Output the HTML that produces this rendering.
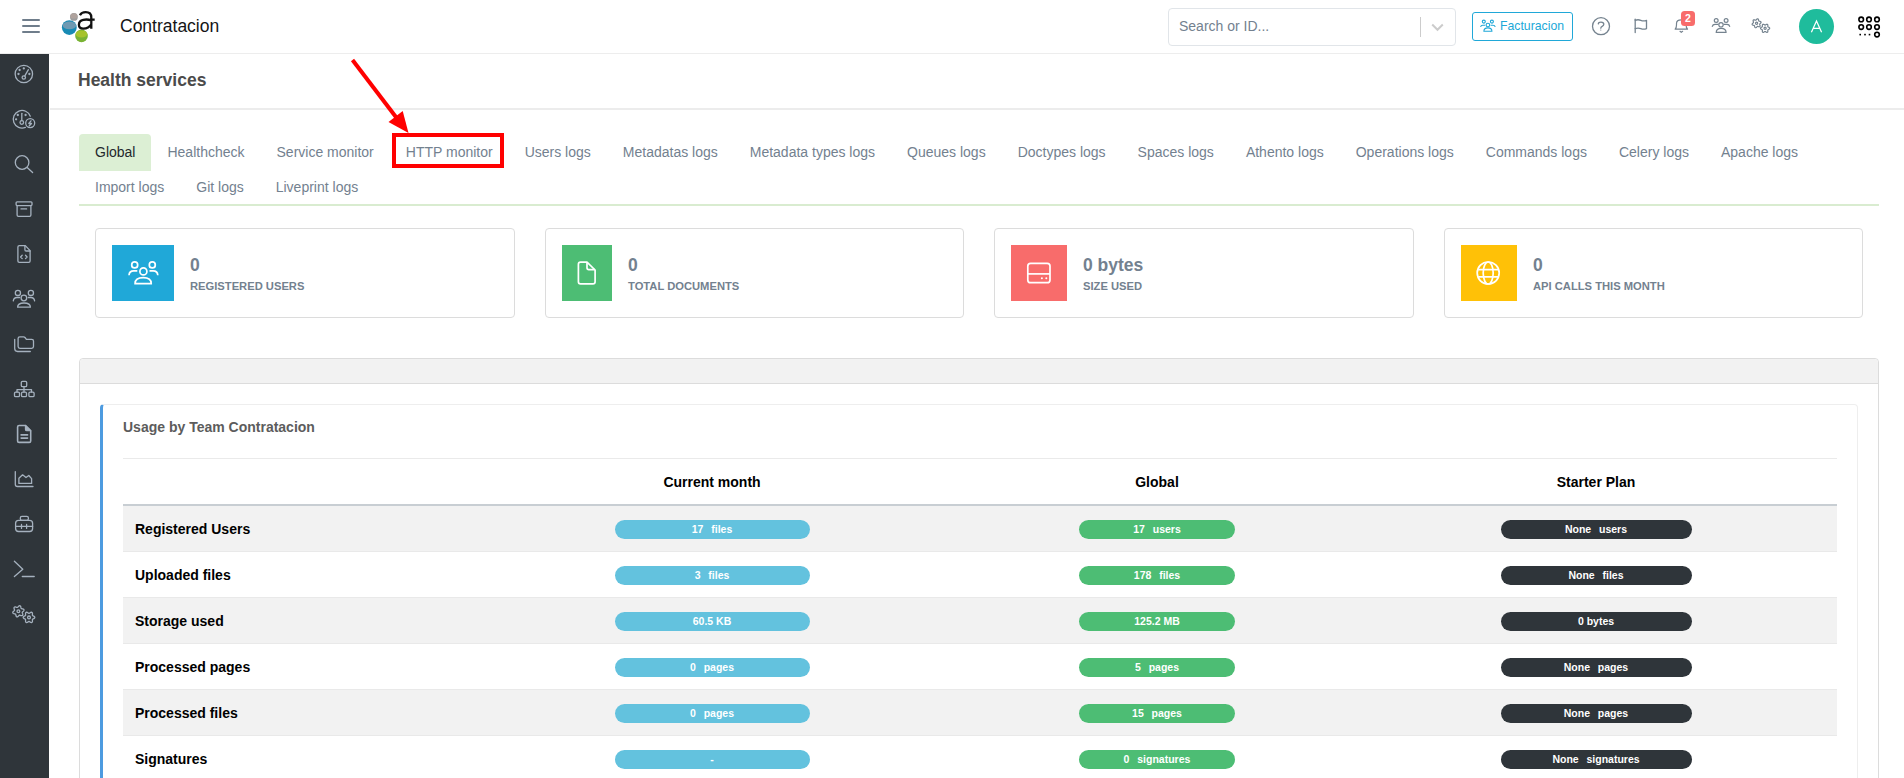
<!DOCTYPE html>
<html><head><meta charset="utf-8">
<style>
*{box-sizing:border-box;margin:0;padding:0}
html,body{width:1904px;height:778px;overflow:hidden;background:#fff;font-family:"Liberation Sans",sans-serif;}
.abs{position:absolute}
#hdr{position:absolute;left:0;top:0;width:1904px;height:54px;background:#fff;border-bottom:1px solid #ededed}
#side{position:absolute;left:0;top:54px;width:49px;height:724px;background:#2f353a}
.sico{position:absolute;left:9px;width:30px;height:30px}
.sico svg,.hico svg{display:block}
.hico{position:absolute;width:30px;height:30px}
#burger{position:absolute;left:22px;top:19px;width:18px;height:14px}
#burger i{position:absolute;left:0;width:18px;height:2px;background:#6f7d8b;border-radius:1px}
#brand{position:absolute;left:120px;top:16px;font-size:17.5px;line-height:20px;color:#151515}
#search{position:absolute;left:1168px;top:8px;width:288px;height:38px;border:1px solid #e1e5e9;border-radius:4px}
#search .ph{position:absolute;left:10px;top:8px;font-size:14px;line-height:18px;color:#73818f}
#search .sep{position:absolute;left:251px;top:8px;width:1px;height:20px;background:#cccccc}
#search svg{position:absolute;left:262px;top:14px}
#fact{position:absolute;left:1472px;top:12px;width:101px;height:29px;border:1px solid #20a8d8;border-radius:3px;color:#20a8d8;font-size:12.25px;line-height:18px}
#fact span{position:absolute;left:27px;top:3.5px}
#fact svg{position:absolute;left:7px;top:6px}
#nbadge{position:absolute;left:1681px;top:11px;width:14px;height:15px;background:#f86c6b;border-radius:3.5px;color:#fff;font-size:10.5px;font-weight:bold;line-height:15px;text-align:center}
#avatar{position:absolute;left:1799px;top:9px;width:35px;height:35px;border-radius:50%;background:#1fbc9c}
#avatar svg{display:block}
#apps{position:absolute;left:1855px;top:14px}
#title{position:absolute;left:78px;top:70px;font-size:17.5px;font-weight:bold;color:#4b4b4b;line-height:20px}
#tline{position:absolute;left:50px;top:108px;width:1854px;height:2px;background:#ececec}
#tabs{position:absolute;left:79px;top:134px;width:1800px;height:72px;border-bottom:2px solid #d9ecd0}
.tabwrap{display:flex;flex-wrap:wrap}
.tab{margin-bottom:-2px;height:37px;padding:0 16px;font-size:14px;line-height:37px;color:#73818f;white-space:nowrap}
.tab.act{background:#dcefd4;color:#23282c;border-radius:4px 4px 0 0}
#redbox{position:absolute;left:392px;top:133px;width:112px;height:35px;border:4px solid #ff0000}
#arrow{position:absolute;left:340px;top:50px}
.stat{position:absolute;top:228px;width:420px;height:90px;border:1px solid #dcdcdc;border-radius:4px;background:#fff}
.stat .ic{position:absolute;left:16px;top:16px;width:62px;height:56px}
.stat .ic svg{position:absolute;left:0;top:0}
.stat .v{position:absolute;left:94px;top:26px;font-size:17.5px;font-weight:bold;color:#73818f;line-height:20px}
.stat .l{position:absolute;left:94px;top:50px;font-size:11.2px;font-weight:bold;color:#73818f;line-height:14px}
#panel{position:absolute;left:79px;top:358px;width:1800px;height:440px;border:1px solid #dcdcdc;border-radius:4px}
#panel .ph{position:absolute;left:0;top:0;width:1798px;height:25px;background:#f2f2f2;border-bottom:1px solid #dcdcdc;border-radius:4px 4px 0 0}
#card{position:absolute;left:100px;top:404px;width:1758px;height:400px;border:1px solid #eeeeee;border-left:3px solid #4d9be0;border-radius:4px}
#utitle{position:absolute;left:123px;top:418px;font-size:14px;font-weight:bold;color:#5c5c5c;line-height:18px}
#hr{position:absolute;left:123px;top:458px;width:1714px;height:1px;background:#eaeaea}
table{position:absolute;left:123px;top:459px;width:1714px;border-collapse:separate;border-spacing:0;font-size:14px}
th{height:47px;font-weight:bold;color:#000;text-align:center;border-bottom:2px solid #c8ced3;padding:0;vertical-align:middle}
td{height:46px;padding:0;vertical-align:middle}
tr.odd td{background:#f2f2f2}
tr+tr+tr td{border-top:1px solid #e9e9e9}
tr:nth-child(2) td{height:45px}
td.n{font-weight:bold;color:#000;padding-left:12px}
td.b{text-align:center}
.bd{display:inline-block;height:19px;border-radius:10px;color:#fff;font-size:10.5px;font-weight:bold;line-height:19px;text-align:center;white-space:pre;vertical-align:middle;position:relative;top:1px}
.ws{word-spacing:1px}
.c1{width:195px;background:#63c2de}
.c2{width:156px;background:#4dbd74}
.c3{width:191px;background:#2f353a}
</style></head><body>
<div id="hdr">
 <div id="burger"><i style="top:0"></i><i style="top:6px"></i><i style="top:12px"></i></div>
 <svg class="abs" style="left:55px;top:5px" width="45" height="40" viewBox="0 0 45 40">
  <defs>
   <clipPath id="cb"><circle cx="14.3" cy="22.6" r="7.4"/></clipPath>
   <clipPath id="cg"><circle cx="26.5" cy="30.9" r="6.3"/></clipPath>
   <clipPath id="cy"><circle cx="18.9" cy="11.9" r="3.9"/></clipPath>
  </defs>
  <circle cx="18.9" cy="11.9" r="3.9" fill="#9c9c9c"/>
  <ellipse cx="18.9" cy="10.9" rx="3.6" ry="2.6" fill="#afa29d" clip-path="url(#cy)"/>
  <circle cx="14.3" cy="22.6" r="7.4" fill="#188bb4"/>
  <ellipse cx="14.4" cy="20.4" rx="6.7" ry="3.9" fill="#6f9ab2" clip-path="url(#cb)"/>
  <circle cx="26.5" cy="30.9" r="6.3" fill="#79b333"/>
  <ellipse cx="26.5" cy="29" rx="5.9" ry="3.4" fill="#a6c32b" clip-path="url(#cg)"/>
  <path transform="translate(0.3 0.8)" d="M24.6 9.4 C25.8 7.1 27.8 6.3 30.4 6.3 C34.2 6.3 36 8.3 36 11.6 V22.9 M36 13.9 H39.4 M36 14.6 C33.5 13.7 30.5 13.5 28 14.1 C25 14.8 23.6 16.6 23.6 19 C23.6 21.5 25.4 22.8 28 22.8 C31.5 22.8 34.5 21 36 18.6" fill="none" stroke="#111" stroke-width="2.3"/>
 </svg>
 <div id="brand">Contratacion</div>
 <div id="search"><span class="ph">Search or ID...</span><i class="sep"></i>
  <svg width="13" height="9" viewBox="0 0 13 9"><path d="M1.2 1.5 L6.5 6.8 L11.8 1.5" fill="none" stroke="#cccccc" stroke-width="2"/></svg></div>
 <div id="fact"><svg width="16" height="16" viewBox="0 0 16 16" fill="none" stroke="#20a8d8" stroke-width="1.1"><circle cx="3.8" cy="2.6" r="1.5"/><circle cx="11.9" cy="2.6" r="1.5"/><circle cx="7.9" cy="6" r="1.8"/><path d="M.6 8 C.8 6.9 1.6 6.3 2.8 6.3 H5.2"/><path d="M10.6 6.3 H13 C14.2 6.3 15 6.9 15.2 8"/><path d="M3.9 12.2 C3.9 10.1 5.4 8.9 7.9 8.9 C10.4 8.9 11.9 10.1 11.9 12.2 Z"/></svg><span>Facturacion</span></div>
 <div class="hico" style="left:1586px;top:11px"><svg viewBox="0 0 30 30" width="30" height="30" fill="none" stroke="#75838f" stroke-width="1.3" stroke-linecap="round" stroke-linejoin="round"><circle cx="15" cy="15.2" r="8.5"/><path d="M12.3 12.9 Q12.5 11.1 15 11.1 Q17.8 11.1 17.8 13.3 Q17.8 14.6 16.2 15.3 Q14.8 15.9 14.8 17.2"/><circle cx="14.8" cy="19" r=".6" fill="#75838f" stroke="none"/></svg></div>
 <div class="hico" style="left:1626px;top:11px"><svg viewBox="0 0 30 30" width="30" height="30" fill="none" stroke="#75838f" stroke-width="1.3" stroke-linecap="round" stroke-linejoin="round"><path d="M9.2 8.2 V21.5"/><path d="M9.2 9.3 Q12 8.2 14.8 9.3 Q17.6 10.4 20.5 9.3 V17.6 Q17.6 18.7 14.8 17.6 Q12 16.5 9.2 17.6"/></svg></div>
 <div class="hico" style="left:1666px;top:6px"><svg viewBox="0 0 30 30" width="30" height="30" fill="none" stroke="#75838f" stroke-width="1.2" stroke-linecap="round" stroke-linejoin="round"><path d="M9.2 23.2 Q10.5 21.6 10.5 19 V17.5 Q10.5 13.9 15.3 13.9 Q20.1 13.9 20.1 17.5 V19 Q20.1 21.6 21.5 23.2 Z"/><path d="M14 25.3 L15.3 26.3 L16.6 25.3"/></svg></div>
 <div id="nbadge">2</div>
 <div class="hico" style="left:1706px;top:11px"><svg viewBox="0 0 30 30" width="30" height="30" fill="none" stroke="#75838f" stroke-width="1.2" stroke-linecap="round" stroke-linejoin="round"><circle cx="10.2" cy="9.5" r="1.9"/><circle cx="20.1" cy="9.5" r="1.9"/><circle cx="15" cy="13.8" r="2.2"/><path d="M6.3 15.4 C6.6 14.1 7.6 13.4 9 13.4 H11.8"/><path d="M18.2 13.4 H21 C22.4 13.4 23.4 14.1 23.7 15.4"/><path d="M10.2 21.4 C10.2 18.9 12 17.3 15.1 17.3 C18.2 17.3 20.1 18.9 20.1 21.4 Z"/></svg></div>
 <div class="hico" style="left:1746px;top:11px"><svg viewBox="0 0 30 30" width="30" height="30" fill="none" stroke="#75838f" stroke-width="1.2" stroke-linecap="round" stroke-linejoin="round"><path d="M14.50 12.30 L14.14 12.61 L13.84 12.87 L13.69 13.13 L13.70 13.43 L13.82 13.80 L13.98 14.25 L14.08 14.74 L14.05 15.20 L13.85 15.55 L13.50 15.75 L13.04 15.78 L12.55 15.68 L12.10 15.52 L11.73 15.40 L11.43 15.39 L11.17 15.54 L10.91 15.84 L10.60 16.20 L10.23 16.53 L9.82 16.74 L9.41 16.74 L9.06 16.53 L8.80 16.15 L8.65 15.68 L8.56 15.21 L8.48 14.82 L8.34 14.56 L8.08 14.42 L7.69 14.34 L7.22 14.25 L6.75 14.10 L6.37 13.84 L6.16 13.49 L6.16 13.08 L6.37 12.67 L6.70 12.30 L7.06 11.99 L7.36 11.73 L7.51 11.47 L7.50 11.17 L7.38 10.80 L7.22 10.35 L7.12 9.86 L7.15 9.40 L7.35 9.05 L7.70 8.85 L8.16 8.82 L8.65 8.92 L9.10 9.08 L9.47 9.20 L9.77 9.21 L10.03 9.06 L10.29 8.76 L10.60 8.40 L10.97 8.07 L11.38 7.86 L11.79 7.86 L12.14 8.07 L12.40 8.45 L12.55 8.92 L12.64 9.39 L12.72 9.78 L12.86 10.04 L13.12 10.18 L13.51 10.26 L13.98 10.35 L14.45 10.50 L14.83 10.76 L15.04 11.11 L15.04 11.52 L14.83 11.93Z"/><circle cx="10.6" cy="12.3" r="1.1"/><path d="M23.70 17.30 L23.59 17.69 L23.29 18.04 L22.87 18.31 L22.44 18.51 L22.09 18.69 L21.87 18.90 L21.80 19.19 L21.82 19.58 L21.86 20.06 L21.83 20.56 L21.68 20.99 L21.40 21.28 L21.00 21.38 L20.55 21.29 L20.11 21.07 L19.72 20.80 L19.39 20.58 L19.10 20.50 L18.81 20.58 L18.48 20.80 L18.09 21.07 L17.65 21.29 L17.20 21.38 L16.80 21.28 L16.52 20.99 L16.37 20.56 L16.34 20.06 L16.38 19.58 L16.40 19.19 L16.33 18.90 L16.11 18.69 L15.76 18.51 L15.33 18.31 L14.91 18.04 L14.61 17.69 L14.50 17.30 L14.61 16.91 L14.91 16.56 L15.33 16.29 L15.76 16.09 L16.11 15.91 L16.33 15.70 L16.40 15.41 L16.38 15.02 L16.34 14.54 L16.37 14.04 L16.52 13.61 L16.80 13.32 L17.20 13.22 L17.65 13.31 L18.09 13.53 L18.48 13.80 L18.81 14.02 L19.10 14.10 L19.39 14.02 L19.72 13.80 L20.11 13.53 L20.55 13.31 L21.00 13.22 L21.40 13.32 L21.68 13.61 L21.83 14.04 L21.86 14.54 L21.82 15.02 L21.80 15.41 L21.87 15.70 L22.09 15.91 L22.44 16.09 L22.87 16.29 L23.29 16.56 L23.59 16.91Z"/><circle cx="19.1" cy="17.3" r="1.1"/></svg></div>
 <div id="avatar"><svg width="35" height="35" viewBox="0 0 35 35" fill="none" stroke="#fff" stroke-width="1.25"><path d="M12.4 23.2 L17.5 12.1 L22.6 23.2 M14.2 19.4 H20.8"/></svg></div>
 <svg id="apps" width="30" height="28" viewBox="0 0 30 28" fill="none" stroke="#000" stroke-width="1.6">
  <circle cx="6.2" cy="5.4" r="2.3"/><circle cx="14" cy="5.4" r="2.3"/><circle cx="22" cy="5.4" r="2.3"/>
  <circle cx="6.2" cy="13.1" r="2.3"/><circle cx="14" cy="13.1" r="2.3"/><circle cx="22" cy="13.1" r="2.3"/>
  <circle cx="22" cy="20.6" r="2.3"/>
  <rect x="4.4" y="19.8" width="1.6" height="1.6" fill="#000" stroke="none"/><rect x="9.2" y="19.8" width="1.6" height="1.6" fill="#000" stroke="none"/><rect x="13.7" y="19.8" width="1.6" height="1.6" fill="#000" stroke="none"/>
 </svg>
</div>
<div id="side"><div class="sico" style="top:5px"><svg viewBox="0 0 30 30" width="30" height="30" fill="none" stroke="#a5b1be" stroke-width="1.3" stroke-linecap="round" stroke-linejoin="round"><circle cx="14.85" cy="15" r="8.7"/><circle cx="14.8" cy="18.5" r="1.7"/><path d="M15.8 16.9 L19.4 10.7"/><circle cx="10.6" cy="11" r=".5" fill="#a5b1be"/><circle cx="14.8" cy="9.4" r=".5" fill="#a5b1be"/><circle cx="9.5" cy="15" r=".5" fill="#a5b1be"/><circle cx="20.4" cy="15" r=".5" fill="#a5b1be"/></svg></div><div class="sico" style="top:50px"><svg viewBox="0 0 30 30" width="30" height="30" fill="none" stroke="#a5b1be" stroke-width="1.3" stroke-linecap="round" stroke-linejoin="round"><path d="M16.4 23.4 A8.8 8.8 0 1 1 21.3 12.2"/><circle cx="12.8" cy="18.5" r="1.8"/><path d="M12.8 9.3 V16.6"/><circle cx="8.8" cy="11" r=".5" fill="#a5b1be"/><circle cx="16.6" cy="11" r=".5" fill="#a5b1be"/><circle cx="7.1" cy="15.3" r=".5" fill="#a5b1be"/><circle cx="21.2" cy="19.1" r="4.5"/><path d="M22 16.8 L19.8 19.5 H22.5 L20.3 21.8"/></svg></div><div class="sico" style="top:95px"><svg viewBox="0 0 30 30" width="30" height="30" fill="none" stroke="#a5b1be" stroke-width="1.3" stroke-linecap="round" stroke-linejoin="round"><circle cx="13.1" cy="13.5" r="6.8"/><path d="M18.2 18.6 L23.6 23.5"/></svg></div><div class="sico" style="top:140px"><svg viewBox="0 0 30 30" width="30" height="30" fill="none" stroke="#a5b1be" stroke-width="1.3" stroke-linecap="round" stroke-linejoin="round"><rect x="7.1" y="7.8" width="15.9" height="3.8" rx="1"/><path d="M8.1 12 V21 Q8.1 22.3 9.4 22.3 H20.6 Q21.9 22.3 21.9 21 V12"/><path d="M12 14.9 H17.6"/></svg></div><div class="sico" style="top:185px"><svg viewBox="0 0 30 30" width="30" height="30" fill="none" stroke="#a5b1be" stroke-width="1.3" stroke-linecap="round" stroke-linejoin="round"><path d="M8.9 8 Q8.9 6.6 10.4 6.6 H16.3 L21.1 11.6 V21.9 Q21.1 23.3 19.7 23.3 H10.3 Q8.9 23.3 8.9 21.9 Z"/><path d="M15.9 6.8 V10.8 Q15.9 12 17.1 12 H21"/><path d="M13.2 16.3 L11.6 18 L13.2 19.6 M16.5 16.3 L18.1 18 L16.5 19.6"/></svg></div><div class="sico" style="top:230px"><svg viewBox="0 0 30 30" width="30" height="30" fill="none" stroke="#a5b1be" stroke-width="1.3" stroke-linecap="round" stroke-linejoin="round"><circle cx="8.9" cy="8.9" r="2.6"/><circle cx="21.9" cy="8.9" r="2.6"/><circle cx="14.9" cy="14" r="2.8"/><path d="M4.3 16.8 C4.6 14.6 6 13.5 8 13.5 H10.6"/><path d="M19.3 13.5 H21.9 C23.9 13.5 25.3 14.6 25.6 16.8"/><path d="M8.6 23.2 C8.6 20.6 11 19 15 19 C19 19 21.4 20.6 21.4 23.2 Z"/></svg></div><div class="sico" style="top:275px"><svg viewBox="0 0 30 30" width="30" height="30" fill="none" stroke="#a5b1be" stroke-width="1.3" stroke-linecap="round" stroke-linejoin="round"><path d="M9.1 9.6 Q9.1 7.8 10.9 7.8 H14.6 Q15.4 7.8 16 8.5 L17.4 10.3 H22.7 Q24.5 10.3 24.5 12.1 V17.6 Q24.5 19.4 22.7 19.4 H10.9 Q9.1 19.4 9.1 17.6 Z"/><path d="M5.7 10.3 V19.6 Q5.7 22.5 8.6 22.5 H21.3"/></svg></div><div class="sico" style="top:320px"><svg viewBox="0 0 30 30" width="30" height="30" fill="none" stroke="#a5b1be" stroke-width="1.3" stroke-linecap="round" stroke-linejoin="round"><rect x="12.3" y="7.3" width="5.4" height="5.3" rx="1.2"/><path d="M15 12.6 V18 M8 18 V15.6 H22.5 V18"/><rect x="5.5" y="18.1" width="5" height="4.6" rx="1.2"/><rect x="12.5" y="18.1" width="5" height="4.6" rx="1.2"/><rect x="19.9" y="18.1" width="5.2" height="4.6" rx="1.2"/></svg></div><div class="sico" style="top:365px"><svg viewBox="0 0 30 30" width="30" height="30" fill="none" stroke="#a5b1be" stroke-width="1.3" stroke-linecap="round" stroke-linejoin="round"><path d="M8.6 8 Q8.6 6.5 10.1 6.5 H16.5 L21.7 11.7 V21.9 Q21.7 23.4 20.2 23.4 H10.1 Q8.6 23.4 8.6 21.9 Z" stroke-width="1.6"/><path d="M16.5 6.5 V10.4 Q16.5 11.7 17.8 11.7 H21.7 Z" fill="#a5b1be"/><path d="M12.1 15.9 H18.6 M12.1 19.1 H18.6" stroke-width="1.6"/></svg></div><div class="sico" style="top:410px"><svg viewBox="0 0 30 30" width="30" height="30" fill="none" stroke="#a5b1be" stroke-width="1.3" stroke-linecap="round" stroke-linejoin="round"><path d="M6.3 7.6 V20.3 Q6.3 22.5 8.5 22.5 H24"/><path d="M9.9 19.4 V14.2 L13.6 10.8 L17 13.5 L19.8 11.5 L22.6 14.6 V19.4 Z"/></svg></div><div class="sico" style="top:455px"><svg viewBox="0 0 30 30" width="30" height="30" fill="none" stroke="#a5b1be" stroke-width="1.3" stroke-linecap="round" stroke-linejoin="round"><rect x="11.3" y="7.4" width="8.1" height="3.9" rx="1.6"/><rect x="6.6" y="11.3" width="17" height="11.2" rx="3"/><path d="M6.6 17.4 H23.6 M12.5 15.4 V19.4 M17.6 15.4 V19.4"/></svg></div><div class="sico" style="top:500px"><svg viewBox="0 0 30 30" width="30" height="30" fill="none" stroke="#a5b1be" stroke-width="1.3" stroke-linecap="round" stroke-linejoin="round"><path d="M5.4 7.3 L13.8 15.2 L5.4 22.6"/><path d="M13.3 22.5 H25.2"/></svg></div><div class="sico" style="top:545px"><svg viewBox="0 0 30 30" width="30" height="30" fill="none" stroke="#a5b1be" stroke-width="1.3" stroke-linecap="round" stroke-linejoin="round"><path d="M14.30 12.30 L13.83 12.69 L13.46 13.02 L13.26 13.34 L13.27 13.71 L13.43 14.18 L13.64 14.75 L13.78 15.37 L13.75 15.95 L13.50 16.40 L13.05 16.65 L12.47 16.68 L11.85 16.54 L11.28 16.33 L10.81 16.17 L10.44 16.16 L10.12 16.36 L9.79 16.73 L9.40 17.20 L8.93 17.63 L8.41 17.89 L7.90 17.90 L7.46 17.64 L7.14 17.15 L6.95 16.54 L6.85 15.95 L6.75 15.46 L6.57 15.13 L6.24 14.95 L5.75 14.85 L5.16 14.75 L4.55 14.56 L4.06 14.24 L3.80 13.80 L3.81 13.29 L4.07 12.77 L4.50 12.30 L4.97 11.91 L5.34 11.58 L5.54 11.26 L5.53 10.89 L5.37 10.42 L5.16 9.85 L5.02 9.23 L5.05 8.65 L5.30 8.20 L5.75 7.95 L6.33 7.92 L6.95 8.06 L7.52 8.27 L7.99 8.43 L8.36 8.44 L8.68 8.24 L9.01 7.87 L9.40 7.40 L9.87 6.97 L10.39 6.71 L10.90 6.70 L11.34 6.96 L11.66 7.45 L11.85 8.06 L11.95 8.65 L12.05 9.14 L12.23 9.47 L12.56 9.65 L13.05 9.75 L13.64 9.85 L14.25 10.04 L14.74 10.36 L15.00 10.80 L14.99 11.31 L14.73 11.83Z"/><circle cx="9.4" cy="12.3" r="1.4"/><path d="M25.80 18.40 L25.66 18.89 L25.27 19.33 L24.73 19.67 L24.18 19.92 L23.73 20.14 L23.46 20.40 L23.38 20.76 L23.41 21.26 L23.46 21.86 L23.44 22.50 L23.26 23.05 L22.90 23.42 L22.40 23.55 L21.83 23.43 L21.27 23.13 L20.77 22.78 L20.36 22.50 L20.00 22.40 L19.64 22.50 L19.23 22.78 L18.73 23.13 L18.17 23.43 L17.60 23.55 L17.10 23.42 L16.74 23.05 L16.56 22.50 L16.54 21.86 L16.59 21.26 L16.62 20.76 L16.54 20.40 L16.27 20.14 L15.82 19.92 L15.27 19.67 L14.73 19.33 L14.34 18.89 L14.20 18.40 L14.34 17.91 L14.73 17.47 L15.27 17.13 L15.82 16.88 L16.27 16.66 L16.54 16.40 L16.62 16.04 L16.59 15.54 L16.54 14.94 L16.56 14.30 L16.74 13.75 L17.10 13.38 L17.60 13.25 L18.17 13.37 L18.73 13.67 L19.23 14.02 L19.64 14.30 L20.00 14.40 L20.36 14.30 L20.77 14.02 L21.27 13.67 L21.83 13.37 L22.40 13.25 L22.90 13.38 L23.26 13.75 L23.44 14.30 L23.46 14.94 L23.41 15.54 L23.38 16.04 L23.46 16.40 L23.73 16.66 L24.18 16.88 L24.73 17.13 L25.27 17.47 L25.66 17.91Z"/><circle cx="20" cy="18.4" r="1.4"/></svg></div></div>
<div id="title">Health services</div>
<div id="tline"></div>
<div id="tabs"><div class="tabwrap"><span class="tab act">Global</span><span class="tab">Healthcheck</span><span class="tab">Service monitor</span><span class="tab">HTTP monitor</span><span class="tab">Users logs</span><span class="tab">Metadatas logs</span><span class="tab">Metadata types logs</span><span class="tab">Queues logs</span><span class="tab">Doctypes logs</span><span class="tab">Spaces logs</span><span class="tab">Athento logs</span><span class="tab">Operations logs</span><span class="tab">Commands logs</span><span class="tab">Celery logs</span><span class="tab">Apache logs</span><span class="tab">Import logs</span><span class="tab">Git logs</span><span class="tab">Liveprint logs</span></div></div>
<div id="redbox"></div>
<svg id="arrow" width="80" height="90" viewBox="0 0 80 90"><path d="M12.5 10 L62 75" stroke="#ff0000" stroke-width="4"/><path d="M68.5 83 L48.5 72 L62.7 61 Z" fill="#ff0000"/></svg>
<div class="stat" style="left:95px;width:420px"><div class="ic" style="background:#20a8d8;width:62px"><svg width="62" height="56" viewBox="0 0 62 56" fill="none" stroke="#ffffff" stroke-width="1.7"><circle cx="22.7" cy="19.9" r="3"/><circle cx="40.3" cy="19.9" r="3"/><circle cx="31.4" cy="26.4" r="3.5"/><path d="M17 30.2 C17.2 27.6 19 25.9 21.6 25.9 H25.3"/><path d="M37.5 25.9 H41.2 C43.8 25.9 45.6 27.6 45.8 30.2"/><path d="M23.1 38.6 C23.1 34.8 26.1 32.7 31.2 32.7 C36.3 32.7 39.2 34.8 39.2 38.6 Z"/></svg></div><div class="v" style="left:94px">0</div><div class="l" style="left:94px">REGISTERED USERS</div></div><div class="stat" style="left:545px;width:419px"><div class="ic" style="background:#4dbd74;width:50px"><svg width="50" height="56" viewBox="0 0 50 56" fill="none" stroke="#ffffff" stroke-width="1.7" stroke-linejoin="round"><path d="M16.4 19.2 Q16.4 17.1 18.5 17.1 H25 L33.1 25 V36.8 Q33.1 38.9 31 38.9 H18.5 Q16.4 38.9 16.4 36.8 Z"/><path d="M25 17.3 V22.8 Q25 24.6 26.8 24.6 H32.9"/></svg></div><div class="v" style="left:82px">0</div><div class="l" style="left:82px">TOTAL DOCUMENTS</div></div><div class="stat" style="left:994px;width:420px"><div class="ic" style="background:#f86c6b;width:56px"><svg width="56" height="56" viewBox="0 0 56 56" fill="none" stroke="#ffffff" stroke-width="1.7"><rect x="16.8" y="18.3" width="22.2" height="19.4" rx="2.8"/><path d="M16.8 28.9 H39"/><circle cx="30.9" cy="33.3" r="1" fill="#ffffff" stroke="none"/><circle cx="35.3" cy="33.3" r="1" fill="#ffffff" stroke="none"/></svg></div><div class="v" style="left:88px">0 bytes</div><div class="l" style="left:88px">SIZE USED</div></div><div class="stat" style="left:1444px;width:419px"><div class="ic" style="background:#ffc107;width:56px"><svg width="56" height="56" viewBox="0 0 56 56" fill="none" stroke="#ffffff" stroke-width="1.7"><circle cx="27.2" cy="28" r="11"/><ellipse cx="27.2" cy="28" rx="5" ry="11"/><path d="M17.2 24.6 H37.2 M17.2 31.8 H37.2"/></svg></div><div class="v" style="left:88px">0</div><div class="l" style="left:88px">API CALLS THIS MONTH</div></div>
<div id="panel"><div class="ph"></div></div>
<div id="card"></div>
<div id="utitle">Usage by Team Contratacion</div>
<div id="hr"></div>
<table><colgroup><col style="width:342px"><col style="width:494px"><col style="width:396px"><col style="width:482px"></colgroup><tr><th></th><th>Current month</th><th>Global</th><th>Starter Plan</th></tr><tr class="odd"><td class="n">Registered Users</td><td class="b"><span class="bd c1 ws">17  files</span></td><td class="b"><span class="bd c2 ws">17  users</span></td><td class="b"><span class="bd c3 ws">None  users</span></td></tr><tr class="even"><td class="n">Uploaded files</td><td class="b"><span class="bd c1 ws">3  files</span></td><td class="b"><span class="bd c2 ws">178  files</span></td><td class="b"><span class="bd c3 ws">None  files</span></td></tr><tr class="odd"><td class="n">Storage used</td><td class="b"><span class="bd c1">60.5 KB</span></td><td class="b"><span class="bd c2">125.2 MB</span></td><td class="b"><span class="bd c3">0 bytes</span></td></tr><tr class="even"><td class="n">Processed pages</td><td class="b"><span class="bd c1 ws">0  pages</span></td><td class="b"><span class="bd c2 ws">5  pages</span></td><td class="b"><span class="bd c3 ws">None  pages</span></td></tr><tr class="odd"><td class="n">Processed files</td><td class="b"><span class="bd c1 ws">0  pages</span></td><td class="b"><span class="bd c2 ws">15  pages</span></td><td class="b"><span class="bd c3 ws">None  pages</span></td></tr><tr class="even"><td class="n">Signatures</td><td class="b"><span class="bd c1">-</span></td><td class="b"><span class="bd c2 ws">0  signatures</span></td><td class="b"><span class="bd c3 ws">None  signatures</span></td></tr></table>
</body></html>
